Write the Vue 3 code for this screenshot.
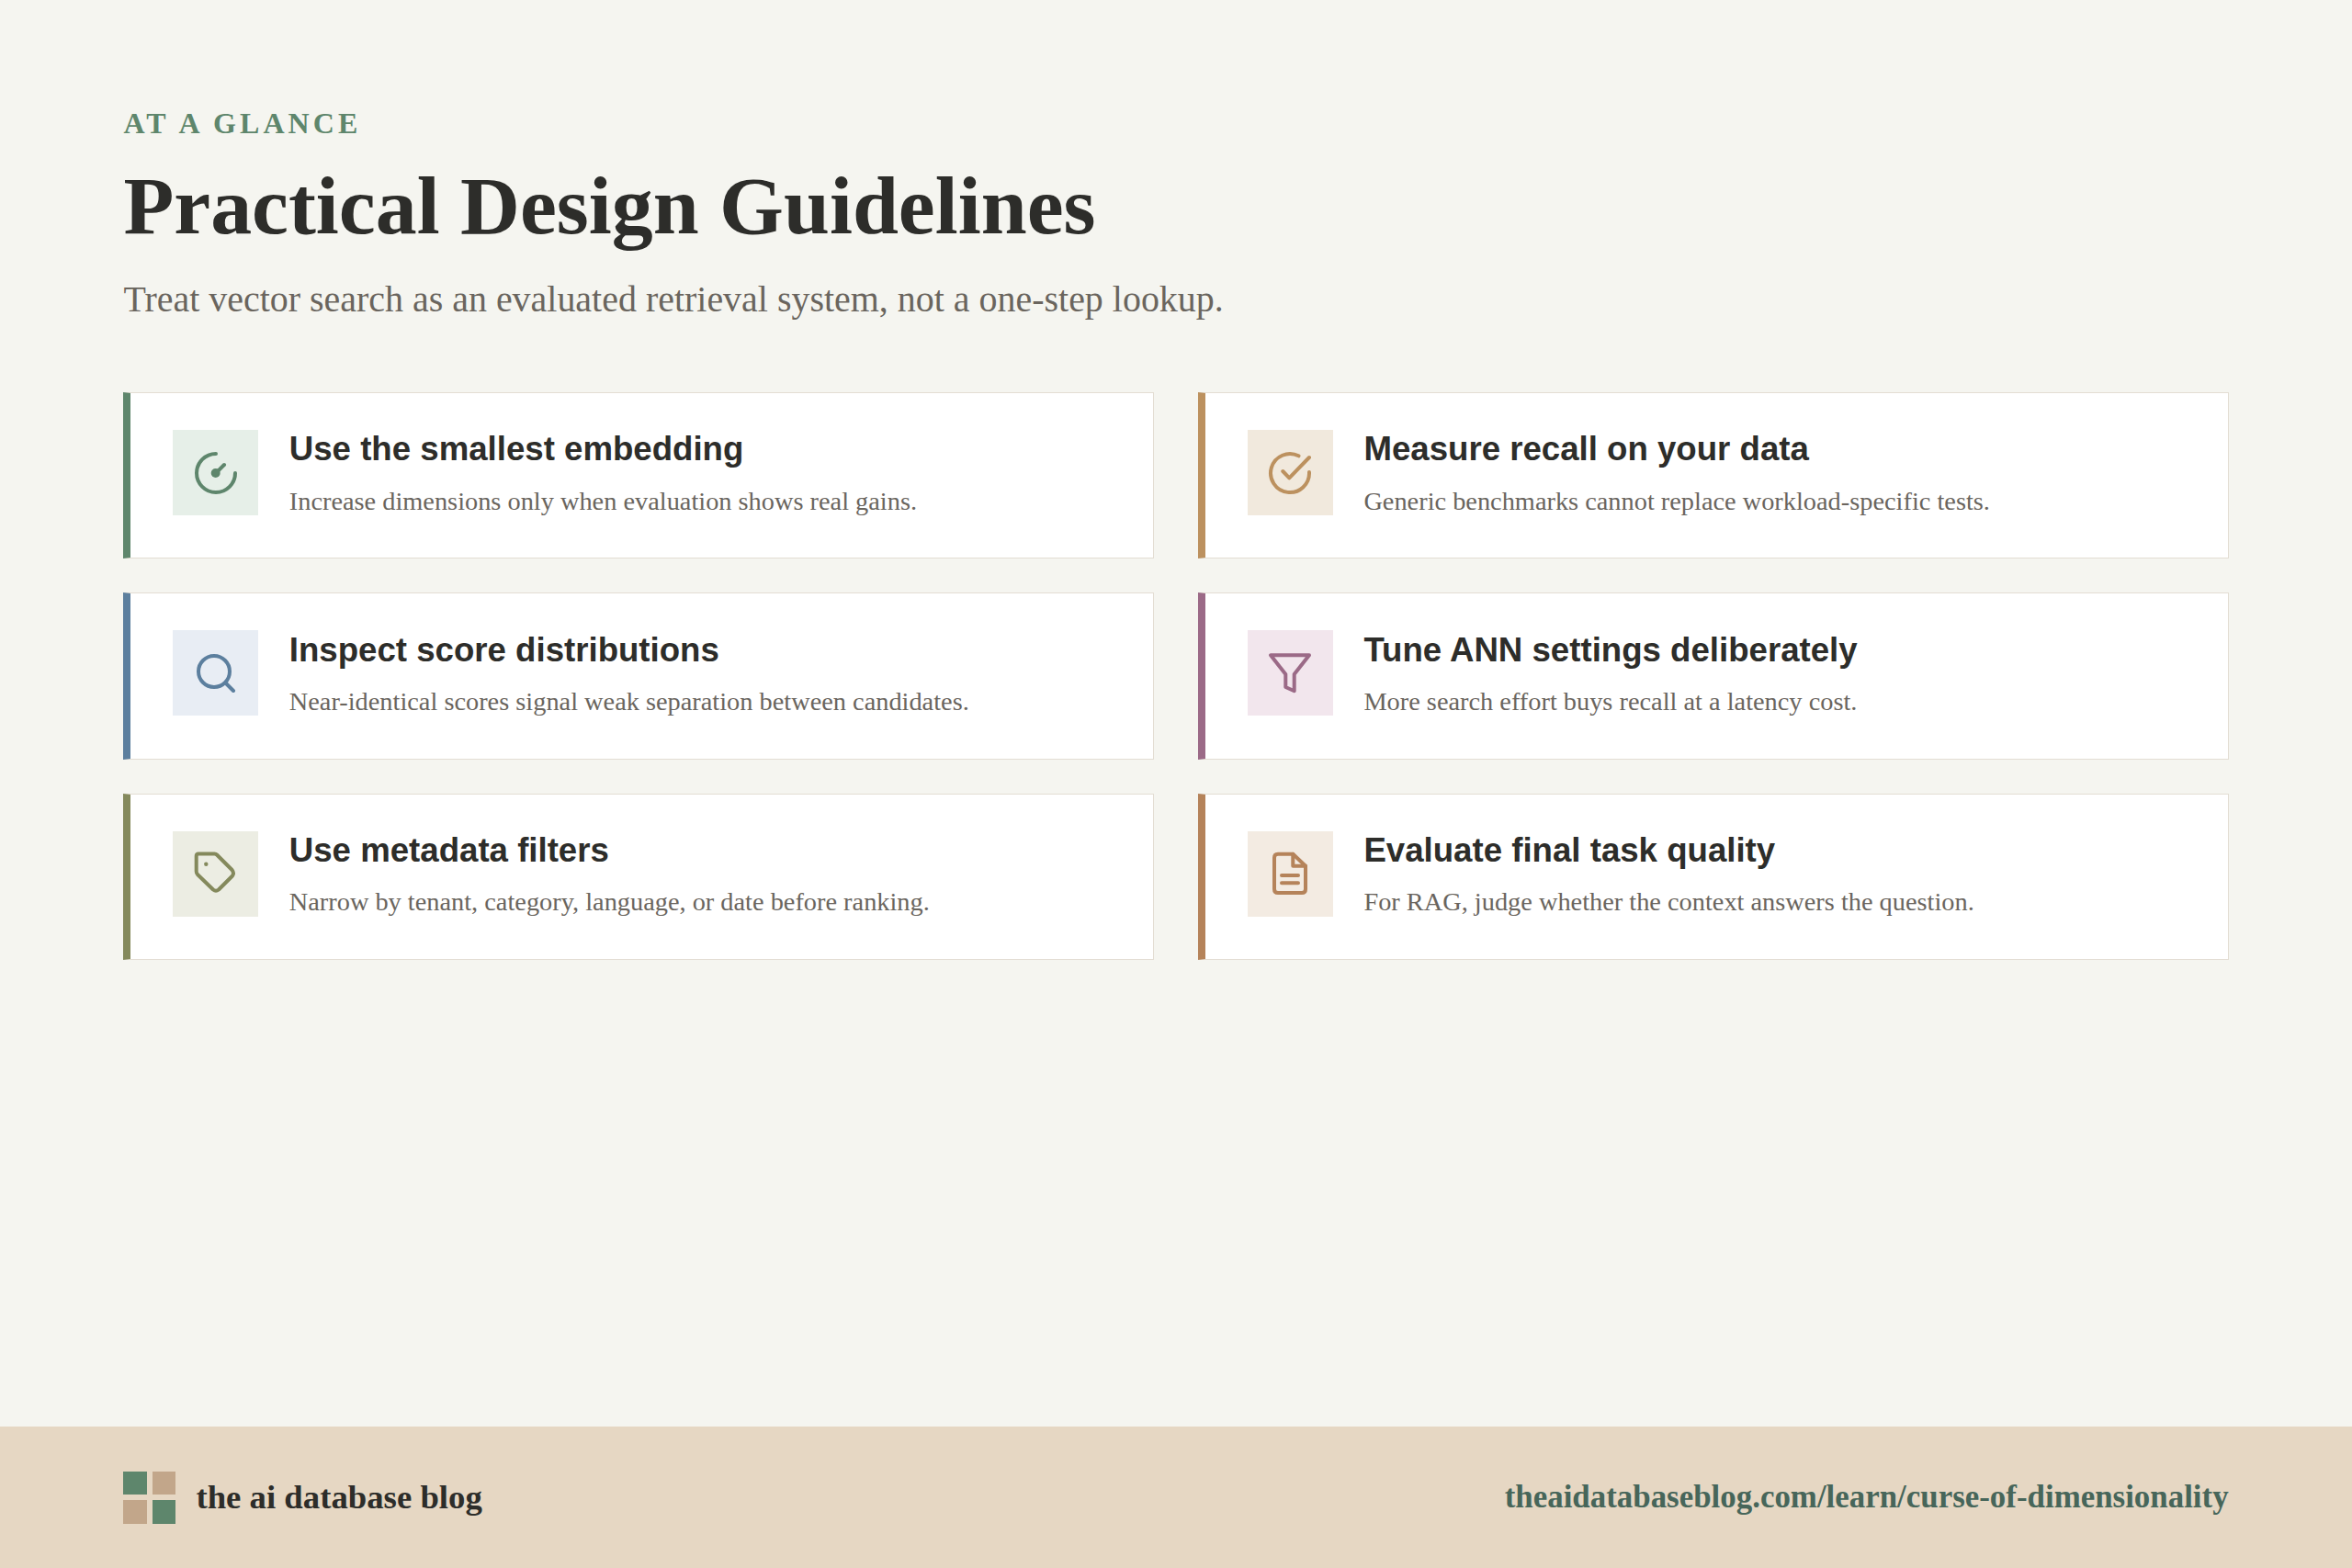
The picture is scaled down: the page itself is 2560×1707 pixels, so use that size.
<script setup>
const cards = [
  { key: 'gauge', title: 'Use the smallest embedding', text: 'Increase dimensions only when evaluation shows real gains.', tone: 'green' },
  { key: 'check', title: 'Measure recall on your data', text: 'Generic benchmarks cannot replace workload-specific tests.', tone: 'tan' },
  { key: 'search', title: 'Inspect score distributions', text: 'Near-identical scores signal weak separation between candidates.', tone: 'blue' },
  { key: 'filter', title: 'Tune ANN settings deliberately', text: 'More search effort buys recall at a latency cost.', tone: 'plum' },
  { key: 'tag', title: 'Use metadata filters', text: 'Narrow by tenant, category, language, or date before ranking.', tone: 'olive' },
  { key: 'doc', title: 'Evaluate final task quality', text: 'For RAG, judge whether the context answers the question.', tone: 'brown' }
]
</script>

<template>
  <div class="page">
    <main class="main">
      <div class="eyebrow">AT A GLANCE</div>
      <h1 class="title">Practical Design Guidelines</h1>
      <p class="sub">Treat vector search as an evaluated retrieval system, not a one-step lookup.</p>
      <section class="grid">
        <article v-for="c in cards" :key="c.key" class="card" :class="c.tone">
          <div class="icon">
            <svg viewBox="0 0 48 48" width="48" height="48" fill="none" stroke="currentColor" stroke-width="4" stroke-linecap="round" stroke-linejoin="round">
              <template v-if="c.key === 'gauge'">
                <path d="M24 3A21 21 0 1 0 45 24" />
                <path d="M24 24L33 15" />
                <circle cx="23.7" cy="24" r="5" fill="currentColor" stroke="none" />
              </template>
              <template v-else-if="c.key === 'check'">
                <path d="M33.5 5.3A21 21 0 1 0 45 23" />
                <path d="M16.3 22L23.3 29.3L45 7" />
              </template>
              <template v-else-if="c.key === 'search'">
                <circle cx="22" cy="22" r="17" />
                <path d="M34.5 34.5L43 43" />
              </template>
              <template v-else-if="c.key === 'filter'">
                <path d="M3 4.3H45L28.7 25V43.3L19.3 39V25Z" />
              </template>
              <template v-else-if="c.key === 'tag'">
                <path d="M5 2.5H22.5Q24 2.5 25 3.5L41.5 20Q44.5 24 41.5 27L27 41.5Q24 44 21 41.5L4 25Q2.7 23.5 2.7 21.5V5Q2.7 2.5 5 2.5Z" />
                <circle cx="13.3" cy="13.7" r="2.2" fill="currentColor" stroke="none" />
              </template>
              <template v-else>
                <path d="M27.3 2.7H11Q7 2.7 7 6.7V41Q7 45 11 45H37Q41 45 41 41V15.7Z" />
                <path d="M27.3 2.7V15.7H41" />
                <path d="M15 26H33M15 34.3H33" />
              </template>
            </svg>
          </div>
          <div class="copy">
            <h2 class="card-title">{{ c.title }}</h2>
            <p class="card-text">{{ c.text }}</p>
          </div>
        </article>
      </section>
    </main>
    <footer class="footer">
      <div class="brand">
        <div class="logo">
          <span class="sq g"></span><span class="sq t"></span><span class="sq t"></span><span class="sq g"></span>
        </div>
        <span class="brand-name">the ai database blog</span>
      </div>
      <span class="url">theaidatabaseblog.com/learn/curse-of-dimensionality</span>
    </footer>
  </div>
</template>

<style>
html, body { margin: 0; background: #f5f5f0; }
</style>

<style scoped>
.page {
  width: 2560px;
  height: 1707px;
  display: flex;
  flex-direction: column;
  background: #f5f5f0;
  font-family: "Liberation Serif", serif;
  color: #2d2d2a;
}
.main { flex: 1; padding: 112px 134.4px 0; box-sizing: border-box; }
.eyebrow {
  font-size: 32px;
  line-height: 44px;
  font-weight: 700;
  letter-spacing: 4.1px;
  color: #5e866c;
}
.title {
  margin: 16.5px 0 0;
  font-size: 89.85px;
  line-height: 102px;
  font-weight: 700;
  color: #2d2d2a;
}
.sub {
  margin: 26px 0 0;
  font-size: 39.95px;
  line-height: 50px;
  color: #6a655e;
}
.grid {
  margin-top: 76.5px;
  display: grid;
  grid-template-columns: 1fr 1fr;
  column-gap: 48px;
  row-gap: 37px;
}
.card {
  height: 181.3px;
  box-sizing: border-box;
  display: flex;
  gap: 33.6px;
  padding: 0 46px;
  background: #fff;
  border: 1.6px solid #e3ddd3;
  border-left: 8px solid var(--accent);
  --accent: #5e866c;
  --tint: #e6efe8;
}
.tan { --accent: #bc915f; --tint: #f1e9dd; }
.blue { --accent: #5c7f9e; --tint: #e8edf4; }
.plum { --accent: #9b6a87; --tint: #f2e6ed; }
.olive { --accent: #84895c; --tint: #ecede3; }
.brown { --accent: #b5835a; --tint: #f3ebe2; }
.icon {
  width: 92.8px;
  height: 92.8px;
  flex: none;
  margin-top: 40.2px;
  display: flex;
  align-items: center;
  justify-content: center;
  background: var(--tint);
  color: var(--accent);
}
.copy { padding-top: 39.4px; }
.card-title {
  margin: 0;
  font-family: "Liberation Sans", sans-serif;
  font-size: 36.64px;
  line-height: 44px;
  font-weight: 700;
  color: #2d2d2a;
}
.card-text {
  margin: 14.4px 0 0;
  font-size: 28.35px;
  line-height: 40px;
  color: #6a655e;
}
.footer {
  height: 153.6px;
  box-sizing: border-box;
  padding: 0 134.4px;
  display: flex;
  align-items: center;
  justify-content: space-between;
  background: #e6d7c3;
}
.brand { display: flex; align-items: center; gap: 22px; }
.logo {
  width: 57px;
  height: 57px;
  display: grid;
  grid-template-columns: 25.3px 25.3px;
  grid-template-rows: 25.3px 25.3px;
  gap: 6.4px;
}
.sq.g { background: #5e866c; }
.sq.t { background: #c2a68a; }
.brand-name {
  font-size: 36.75px;
  line-height: 42px;
  padding-bottom: 1px;
  font-weight: 700;
  color: #2d2d2a;
}
.url {
  font-size: 34.9px;
  font-weight: 700;
  color: #47665a;
}
</style>
